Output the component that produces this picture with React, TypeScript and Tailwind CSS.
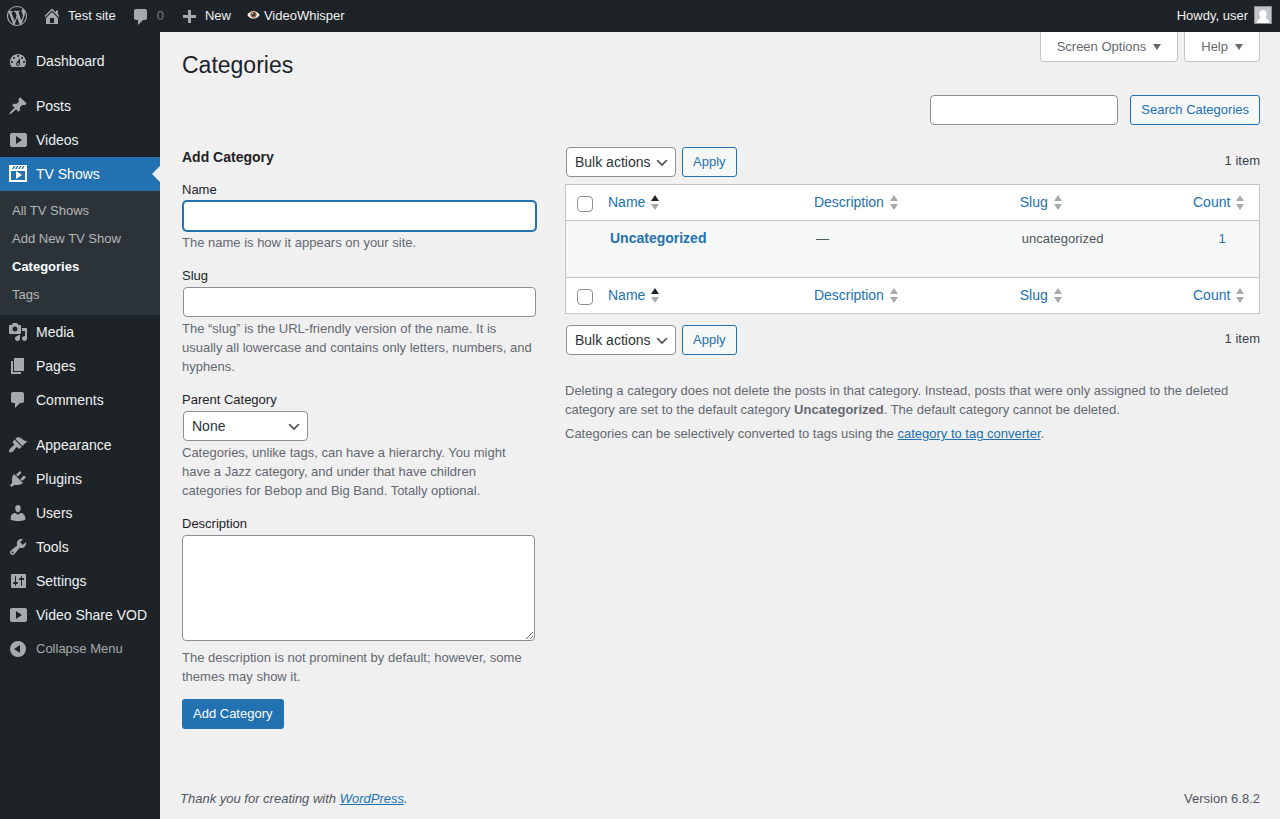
import type { ReactNode } from "react";

const ICONS = {
  wordpress:
    "M20 10c0-5.51-4.49-10-10-10C4.48 0 0 4.49 0 10c0 5.52 4.48 10 10 10 5.51 0 10-4.48 10-10zM7.78 15.37L4.37 6.22c.55-.02 1.17-.08 1.17-.08.5-.06.44-1.13-.06-1.11 0 0-1.45.11-2.37.11-.18 0-.37 0-.58-.01C4.12 2.69 6.87 1.11 10 1.11c2.33 0 4.45.87 6.05 2.34-.68-.11-1.65.39-1.65 1.58 0 .74.45 1.36.9 2.1.35.61.55 1.36.55 2.46 0 1.49-1.4 5-1.4 5l-3.03-8.37c.54-.02.82-.17.82-.17.5-.05.44-1.25-.06-1.22 0 0-1.44.12-2.38.12-.87 0-2.33-.12-2.33-.12-.5-.03-.56 1.2-.06 1.22l.92.08 1.26 3.41zM17.41 10c.24-.64.74-1.87.43-4.25.7 1.29 1.05 2.71 1.05 4.25 0 3.29-1.73 6.24-4.4 7.78.97-2.59 1.94-5.2 2.92-7.78zM6.1 18.09C3.12 16.65 1.11 13.53 1.11 10c0-1.3.23-2.48.72-3.59C3.25 10.3 4.67 14.2 6.1 18.09zm4.03-6.63l2.58 6.98c-.86.29-1.76.45-2.71.45-.79 0-1.57-.11-2.29-.33.81-2.38 1.62-4.74 2.42-7.1z",
  home: "M16 8.5l1.53 1.53-1.06 1.06L10 4.6l-6.47 6.49-1.06-1.06L10 2.5l4 4v-2h2v4zm-6-2.46l6 5.99V18H4v-5.97zM12 17v-5H8v5h4z",
  plus: "M17 7v3h-5v5H9v-5H4V7h5V2h3v5h5z",
  dashboard:
    "M3.76 16h12.48c1.1-1.37 1.76-3.11 1.76-5 0-4.42-3.58-8-8-8s-8 3.58-8 8c0 1.89.66 3.63 1.76 5zM10 4c.55 0 1 .45 1 1s-.45 1-1 1-1-.45-1-1 .45-1 1-1zM6 6c.55 0 1 .45 1 1s-.45 1-1 1-1-.45-1-1 .45-1 1-1zm8 0c.55 0 1 .45 1 1s-.45 1-1 1-1-.45-1-1 .45-1 1-1zm-5.37 5.55L12 7v6c0 1.1-.9 2-2 2s-2-.9-2-2c0-.57.24-1.08.63-1.45zM4 10c.55 0 1 .45 1 1s-.45 1-1 1-1-.45-1-1 .45-1 1-1zm12 0c.55 0 1 .45 1 1s-.45 1-1 1-1-.45-1-1 .45-1 1-1zm-5 3c0-.55-.45-1-1-1s-1 .45-1 1 .45 1 1 1 1-.45 1-1z",
  post: "M10.44 3.02l1.82-1.82 6.36 6.35-1.83 1.82c-1.05-.68-2.48-.57-3.41.36l-.75.75c-.92.93-1.04 2.35-.35 3.41l-1.83 1.82-2.41-2.41-2.8 2.79c-.42.42-3.38 2.71-3.8 2.29s1.86-3.39 2.28-3.81l2.79-2.79L4.1 9.36l1.83-1.82c1.05.69 2.48.57 3.4-.36l.75-.75c.93-.92 1.05-2.35.36-3.41z",
  video: "M19 15V5c0-1.1-.9-2-2-2H4c-1.1 0-2 .9-2 2v10c0 1.1.9 2 2 2h13c1.1 0 2-.9 2-2zM8 14V6l6 4z",
  tv: "M1 1h18v17H1zM3 7v9h14V7zM8 7v8l6-4zM4 5h1.500L7.300 2H5.800zM7.100 5h1.500L10.400 2H8.900zM10.200 5h1.500L13.500 2H12zM13.300 5h1.500L16.600 2H15.100z",
  media:
    "M13 11V4c0-.55-.45-1-1-1h-1.67L9 1H5L3.67 3H2c-.55 0-1 .45-1 1v7c0 .55.45 1 1 1h10c.55 0 1-.45 1-1zM7 4.5c1.38 0 2.5 1.12 2.5 2.5S8.38 9.5 7 9.5 4.5 8.38 4.5 7 5.62 4.5 7 4.5zM14 6h5v10.5c0 1.38-1.12 2.5-2.5 2.5S14 17.88 14 16.5s1.12-2.5 2.5-2.5c.17 0 .34.02.5.05V9h-3V6zm-4 8.05V13h2v3.5c0 1.38-1.12 2.5-2.5 2.5S7 17.88 7 16.5 8.12 14 9.5 14c.17 0 .34.02.5.05z",
  page: "M6 15V2h10v13H6zm-1 1h8v2H3V5h2v11z",
  comment: "M5 2h9c1.1 0 2 .9 2 2v7c0 1.1-.9 2-2 2h-2l-5 5v-5H5c-1.1 0-2-.9-2-2V4c0-1.1.9-2 2-2z",
  appearance:
    "M14.48 11.06L7.41 3.99l1.5-1.5c.5-.56 2.3-.47 3.51.32 1.21.8 1.43 1.28 2.91 2.1 1.18.64 2.45 1.26 4.45.85zm-.71.71L6.7 4.7 4.93 6.47c-.39.39-.39 1.02 0 1.41l1.06 1.06c.39.39.39 1.03 0 1.42-.6.6-1.43 1.11-2.21 1.69-.35.26-.7.53-1.01.84C1.43 14.23.4 16.08 1.4 17.07c.99 1 2.84-.03 4.18-1.36.31-.31.58-.66.85-1.02.57-.78 1.08-1.61 1.69-2.21.39-.39 1.02-.39 1.41 0l1.06 1.06c.39.39 1.02.39 1.41 0z",
  plugins:
    "M13.11 4.36L9.87 7.6 8 5.73l3.24-3.24c.35-.34 1.05-.2 1.56.32.52.51.66 1.21.31 1.55zm-8 1.77l.91-1.12 9.01 9.01-1.19.84c-.71.71-2.63 1.16-3.82 1.16H6.14L4.9 17.26c-.59.59-1.54.59-2.12 0-.59-.58-.59-1.53 0-2.12l1.24-1.24v-3.88c0-1.13.4-3.19 1.09-3.89zm7.26 3.97l3.24-3.24c.34-.35 1.04-.21 1.55.31.52.51.66 1.21.31 1.55l-3.24 3.25z",
  users:
    "M10 9.25c-2.27 0-2.73-3.44-2.73-3.44C7 4.02 7.82 2 9.97 2c2.16 0 2.98 2.02 2.71 3.81 0 0-.41 3.44-2.68 3.44zm0 2.57L12.72 10c2.39 0 4.52 2.33 4.52 4.53v2.49s-3.65 1.13-7.24 1.13c-3.65 0-7.24-1.13-7.24-1.13v-2.49c0-2.25 1.94-4.48 4.47-4.48z",
  tools:
    "M16.68 9.77c-1.34 1.34-3.3 1.67-4.95.99l-5.41 6.52c-.99.99-2.59.99-3.58 0s-.99-2.59 0-3.57l6.52-5.42c-.68-1.65-.35-3.61.99-4.95 1.28-1.28 3.12-1.62 4.72-1.06l-2.89 2.89 2.82 2.82 2.86-2.87c.53 1.58.18 3.39-1.08 4.65zM3.81 16.21c.4.39 1.04.39 1.43 0 .4-.4.4-1.04 0-1.43-.39-.4-1.03-.4-1.43 0-.39.39-.39 1.03 0 1.43z",
  settings:
    "M18 16V4c0-.55-.45-1-1-1H4c-.55 0-1 .45-1 1v12c0 .55.45 1 1 1h13c.55 0 1-.45 1-1zM8 11h1c.55 0 1 .45 1 1s-.45 1-1 1H8v1.500c0 .28-.22.5-.5.5s-.5-.22-.5-.5V13H6c-.55 0-1-.45-1-1s.45-1 1-1h1V5.500c0-.28.22-.5.5-.5s.5.22.5.5V11zm5-2h-1c-.55 0-1-.45-1-1s.45-1 1-1h1V5.500c0-.28.22-.5.5-.5s.5.22.5.5V7h1c.55 0 1 .45 1 1s-.45 1-1 1h-1v5.500c0 .28-.22.5-.5.5s-.5-.22-.5-.5V9z",
  collapse: "M10 2a8 8 0 1 0 0 16 8 8 0 0 0 0-16zM12 6v8l-6-4z",
};

type IconName = keyof typeof ICONS;

interface MenuItem {
  label: string;
  icon: IconName;
  gapBefore?: boolean;
  children?: string[];
}

const MENU: MenuItem[] = [
  { label: "Dashboard", icon: "dashboard" },
  { label: "Posts", icon: "post", gapBefore: true },
  { label: "Videos", icon: "video" },
  { label: "TV Shows", icon: "tv", children: ["All TV Shows", "Add New TV Show", "Categories", "Tags"] },
  { label: "Media", icon: "media" },
  { label: "Pages", icon: "page" },
  { label: "Comments", icon: "comment" },
  { label: "Appearance", icon: "appearance", gapBefore: true },
  { label: "Plugins", icon: "plugins" },
  { label: "Users", icon: "users" },
  { label: "Tools", icon: "tools" },
  { label: "Settings", icon: "settings" },
  { label: "Video Share VOD", icon: "video" },
];

const FIELD = "rounded border border-[#8c8f94] bg-white text-sm text-[#2c3338] outline-none";
const BUTTON = "h-[30px] rounded-[3px] border border-[#2271b1] bg-[#f6f7f7] px-2.5 pb-0.5 text-[#2271b1]";

function Icon({ name }: { name: IconName }) {
  return (
    <svg className="w-5 h-5 shrink-0" viewBox="0 0 20 20" fill="currentColor" fillRule="evenodd" aria-hidden="true">
      <path d={ICONS[name]} />
    </svg>
  );
}

function AdminBar() {
  return (
    <header className="flex items-center h-8 bg-[#1d2327] text-[#f0f0f1]">
      <a href="#" aria-label="About WordPress" className="px-[7px] text-[#a7aaad]">
        <Icon name="wordpress" />
      </a>
      <a href="#" className="flex items-center gap-1.5 px-2">
        <span className="text-[#a7aaad]"><Icon name="home" /></span>
        <span className="pb-0.5">Test site</span>
      </a>
      <a href="#" className="flex items-center gap-1.5 px-[7px] text-[#a7aaad]" aria-label="0 comments">
        <span className="pt-0.5"><Icon name="comment" /></span>
        <span className="pb-0.5 text-[#787c82]">0</span>
      </a>
      <a href="#" className="flex items-center gap-1.5 px-2">
        <span className="pt-1 text-[#a7aaad]"><Icon name="plus" /></span>
        <span className="pb-0.5">New</span>
      </a>
      <a href="#" className="flex items-center gap-1 px-2 pb-0.5">
        <svg className="w-[13px] h-[13px]" viewBox="0 0 13 13" aria-hidden="true">
          <path d="M0.300 6C1.800 3.500 4.200 2 6.500 2S11.200 3.500 12.700 6C11.200 8.500 9 9.600 6.500 9.600S1.800 8.500 0.300 6z" fill="#f7f7f7" />
          <circle cx="6.500" cy="5.600" r="3.200" fill="#a5673f" />
          <circle cx="6.500" cy="5.600" r="1.800" fill="#2b2b2f" />
          <circle cx="5.700" cy="4.800" r="0.700" fill="#fff" />
        </svg>
        VideoWhisper
      </a>
      <a href="#" className="ml-auto flex items-center gap-1.5 px-2 pb-0.5">
        Howdy, user
        <svg className="w-[18px] h-[18px] border border-[#8c8f94] bg-[#c3c4c7]" viewBox="0 0 16 16" fill="#fff" aria-hidden="true">
          <path d="M8 3a3.800 3.800 0 0 1 3.800 4c0 1.500-.6 2.700-1.400 3.500.3 1 4 1.500 4 5.500H2c0-4 3.300-4.500 3.600-5.500C4.800 9.700 4.200 8.500 4.200 7A3.800 3.800 0 0 1 8 3z" />
        </svg>
      </a>
    </header>
  );
}

function Sidebar() {
  return (
    <nav className="w-40 shrink-0 bg-[#1d2327] pt-3 text-[#f0f0f1]">
      <ul>
        {MENU.map((item) => (
          <li key={item.label} className={item.gapBefore ? "mt-[11px]" : ""}>
            <a
              href="#"
              className={`relative flex items-center gap-2 h-[34px] pl-2 text-sm whitespace-nowrap ${
                item.children ? "bg-[#2271b1] text-white" : ""
              }`}
            >
              <span className={item.children ? "text-white" : "text-[#a7aaad]"}>
                <Icon name={item.icon} />
              </span>
              {item.label}
              {item.children && (
                <span className="absolute right-0 top-[9px] border-y-8 border-r-8 border-y-transparent border-r-[#f0f0f1]" />
              )}
            </a>
            {item.children && (
              <ul className="bg-[#2c3338] py-1.5">
                {item.children.map((child) => (
                  <li key={child}>
                    <a
                      href="#"
                      className={`block px-3 leading-7 ${
                        child === "Categories" ? "font-semibold text-white" : "text-[#b4b6b9]"
                      }`}
                    >
                      {child}
                    </a>
                  </li>
                ))}
              </ul>
            )}
          </li>
        ))}
      </ul>
      <button className="flex items-center gap-2 h-[34px] pl-2 text-[#a7aaad]">
        <Icon name="collapse" />
        <span className="pb-0.5">Collapse Menu</span>
      </button>
    </nav>
  );
}

function Select({ id, label, value, className }: { id: string; label?: string; value: string; className: string }) {
  return (
    <div className={`relative ${className}`}>
      <select id={id} aria-label={label} className={`appearance-none w-full h-[30px] pl-2 pr-6 ${FIELD}`}>
        <option>{value}</option>
      </select>
      <svg className="absolute right-1.5 top-2 w-4 h-4 pointer-events-none" viewBox="0 0 20 20" fill="#555" aria-hidden="true">
        <path d="M5 6l5 5 5-5 2 1-7 7-7-7 2-1z" />
      </svg>
    </div>
  );
}

function Field({ id, label, help, children }: { id: string; label: string; help: string; children: ReactNode }) {
  return (
    <div className="mb-[13px]">
      <label htmlFor={id} className="block leading-[22px] text-[#1d2327]">{label}</label>
      {children}
      <p className="mt-0.5 pr-0.5 text-[#646970]">{help}</p>
    </div>
  );
}

function AddCategoryForm() {
  return (
    <form onSubmit={(e) => e.preventDefault()}>
      <h2 className="mb-3 text-sm leading-5 font-semibold text-[#1d2327]">Add Category</h2>
      <Field id="name" label="Name" help="The name is how it appears on your site.">
        <div className="flex px-px">
          <input id="name" type="text" className="h-[30px] w-full px-2 rounded border border-[#2271b1] bg-white text-sm outline-none ring-1 ring-[#2271b1]" />
        </div>
      </Field>
      <Field
        id="slug"
        label="Slug"
        help="The “slug” is the URL-friendly version of the name. It is usually all lowercase and contains only letters, numbers, and hyphens."
      >
        <div className="flex px-px">
          <input id="slug" type="text" className={`h-[30px] w-full px-2 ${FIELD}`} />
        </div>
      </Field>
      <Field
        id="parent"
        label="Parent Category"
        help="Categories, unlike tags, can have a hierarchy. You might have a Jazz category, and under that have children categories for Bebop and Big Band. Totally optional."
      >
        <div className="px-px">
          <Select id="parent" value="None" className="w-[125px]" />
        </div>
      </Field>
      <Field
        id="description"
        label="Description"
        help="The description is not prominent by default; however, some themes may show it."
      >
        <div className="flex pr-0.5 pb-[5px]">
          <textarea id="description" rows={5} className={`h-[106px] w-full px-2 py-0.5 ${FIELD}`} />
        </div>
      </Field>
      <button type="submit" className="h-[30px] rounded-[3px] bg-[#2271b1] px-[11px] pb-0.5 text-white">
        Add Category
      </button>
    </form>
  );
}

function TableNav({ id }: { id: string }) {
  return (
    <div className="flex items-center gap-1.5 pl-px">
      <Select id={id} label="Select bulk action" value="Bulk actions" className="w-[110px]" />
      <button className={BUTTON}>Apply</button>
      <span className="ml-auto self-start pt-1 text-[#3c434a]">1 item</span>
    </div>
  );
}

function SortLink({ label, sorted }: { label: string; sorted?: boolean }) {
  return (
    <a href="#" className="flex items-center gap-[5px] px-2 pb-0.5 text-sm leading-5 font-normal text-[#2271b1]">
      {label}
      <svg className="w-2.5 h-4 shrink-0" viewBox="0 0 10 16" aria-hidden="true">
        <path d="M5 1l4 6H1z" fill={sorted ? "#1d2327" : "#a7aaad"} />
        <path d="M5 16l4-6H1z" fill="#a7aaad" />
      </svg>
    </a>
  );
}

function HeadingRow({ id }: { id: string }) {
  return (
    <tr className="h-9 bg-white">
      <td className="pl-[11px] pt-0.5 align-middle">
        <input
          id={id}
          type="checkbox"
          aria-label="Select All"
          className="block appearance-none w-4 h-4 rounded border border-[#8c8f94] bg-white"
        />
      </td>
      <th scope="col"><SortLink label="Name" sorted /></th>
      <th scope="col"><SortLink label="Description" /></th>
      <th scope="col"><SortLink label="Slug" /></th>
      <th scope="col"><SortLink label="Count" /></th>
    </tr>
  );
}

function CategoryTable() {
  return (
    <table className="table-fixed w-full my-[7px] border-separate border-spacing-0 border border-[#c3c4c7] text-left text-[#50575e]">
      <colgroup>
        <col className="w-[34px]" />
        <col />
        <col />
        <col className="w-1/4" />
        <col className="w-[74px]" />
      </colgroup>
      <thead className="[&_:is(th,td)]:border-b [&_:is(th,td)]:border-[#c3c4c7]">
        <HeadingRow id="select-all-top" />
      </thead>
      <tbody>
        <tr className="h-14 bg-[#f6f7f7] align-top">
          <td />
          <td className="px-2.5 py-2">
            <a href="#" className="block text-sm leading-[18px] font-semibold text-[#2271b1]">Uncategorized</a>
          </td>
          <td className="px-2.5 py-2">—</td>
          <td className="px-2.5 py-2">uncategorized</td>
          <td className="py-2 text-center">
            <a href="#" className="text-[#2271b1]">1</a>
          </td>
        </tr>
      </tbody>
      <tfoot className="[&_:is(th,td)]:border-t [&_:is(th,td)]:border-[#c3c4c7]">
        <HeadingRow id="select-all-bottom" />
      </tfoot>
    </table>
  );
}

export default function App() {
  return (
    <div className="flex flex-col min-h-screen bg-[#f0f0f1] font-['Liberation_Sans',Arial,sans-serif] text-[13px] leading-[19px] text-[#3c434a]">
      <AdminBar />
      <div className="flex flex-1">
        <Sidebar />
        <div className="flex flex-col flex-1 min-w-0 pl-5 pr-5">
          <main className="pl-0.5">
            <div className="flex items-start justify-between">
              <h1 className="pt-[18px] text-[23px] leading-[30px] text-[#1d2327]">Categories</h1>
              <div className="flex gap-1.5 text-[#646970]">
                {["Screen Options", "Help"].map((label) => (
                  <button
                    key={label}
                    className="flex items-center gap-1.5 h-[30px] pl-4 pr-[15px] rounded-b border border-t-0 border-[#c3c4c7] bg-white"
                  >
                    {label}
                    <svg className="w-2.5 h-2.5" viewBox="0 0 10 10" fill="currentColor" aria-hidden="true">
                      <path d="M1 2h8L5 8z" />
                    </svg>
                  </button>
                ))}
              </div>
            </div>

            <form className="flex justify-end gap-3 mt-[15px]" onSubmit={(e) => e.preventDefault()}>
              <input type="search" aria-label="Search Categories" className={`h-[30px] w-[188px] px-2 ${FIELD}`} />
              <button type="submit" className={BUTTON}>Search Categories</button>
            </form>

            <div className="grid grid-cols-[355fr_695fr] gap-7 mt-[22px]">
              <AddCategoryForm />
              <div className="min-w-0">
                <TableNav id="bulk-top" />
                <CategoryTable />
                <div className="pt-1">
                  <TableNav id="bulk-bottom" />
                </div>
                <div className="mt-[26px] space-y-[5px] text-[#646970]">
                  <p>
                    Deleting a category does not delete the posts in that category. Instead, posts that were only assigned to
                    the deleted category are set to the default category <strong>Uncategorized</strong>. The default category
                    cannot be deleted.
                  </p>
                  <p>
                    Categories can be selectively converted to tags using the{" "}
                    <a href="#" className="text-[#2271b1] underline">category to tag converter</a>.
                  </p>
                </div>
              </div>
            </div>
          </main>

          <footer className="flex justify-between mt-auto pt-10 pb-[11px] text-[#50575e]">
            <p className="italic">
              Thank you for creating with <a href="#" className="text-[#2271b1] underline">WordPress</a>.
            </p>
            <p>Version 6.8.2</p>
          </footer>
        </div>
      </div>
    </div>
  );
}
